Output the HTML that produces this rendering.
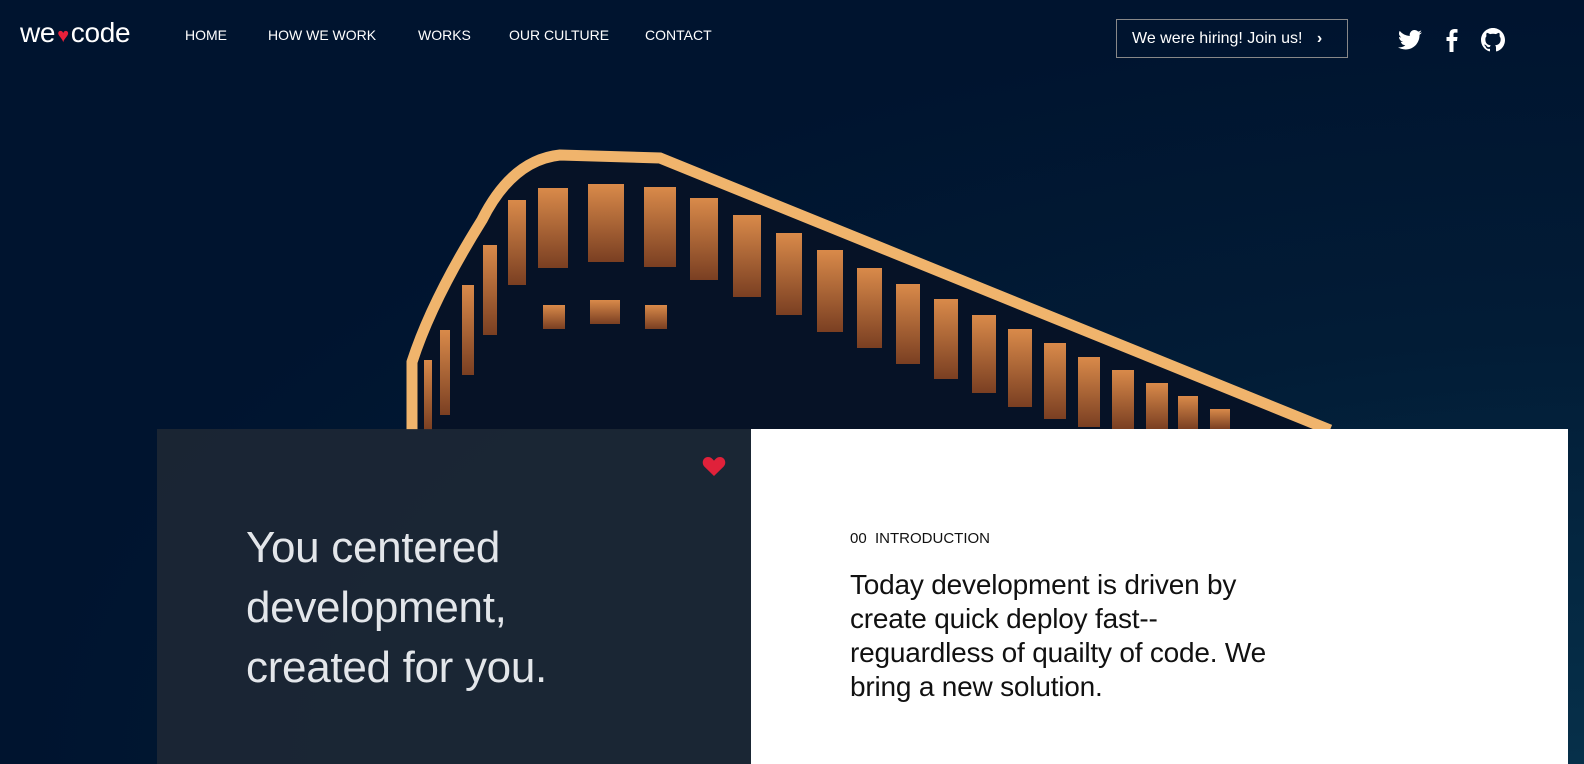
<!DOCTYPE html>
<html><head><style>
body{margin:0;width:1584px;height:764px;overflow:hidden;background:#011a33;font-family:"Liberation Sans",sans-serif;position:relative}
.bg{position:absolute;inset:0;background:radial-gradient(ellipse at 100% 100%,#06304a 0%,#021c36 40%,#00142f 70%),#011a33}
.nav{position:absolute;top:0;left:0;width:100%;height:70px}
.logo{position:absolute;left:20px;top:17px;color:#fff;font-size:28px;letter-spacing:-.3px}
.logo span{color:#e8203a;font-size:20px;margin:0 2px}
.menu a{position:absolute;top:27px;color:#fff;font-size:14px;text-decoration:none}
.btn{position:absolute;left:1116px;top:19px;width:232px;height:39px;border:1px solid #888;color:#fff;font-size:16px;line-height:38px;box-sizing:border-box;padding-left:15px}
.dark{position:absolute;left:157px;top:429px;width:594px;height:335px;background:rgba(30,40,52,.88)}
.white{position:absolute;left:751px;top:429px;width:817px;height:335px;background:#fff}
.h1{position:absolute;left:246px;top:518px;color:#e3e6ea;font-size:44px;line-height:60px;font-weight:300;letter-spacing:-.3px}
.intro{position:absolute;left:850px;top:530px;font-size:15px;color:#111}
.p{position:absolute;left:850px;top:568px;font-size:28px;line-height:34px;color:#111;width:440px;letter-spacing:-.2px}
</style></head><body>
<div class="bg"></div>
<svg style="position:absolute;left:0;top:0" width="1584" height="764">
<defs><linearGradient id="w" x1="0" y1="0" x2="0" y2="1"><stop offset="0" stop-color="#d98a4a"/><stop offset="1" stop-color="#7a3f22"/></linearGradient></defs>
<path d="M410 430 L410 360 Q430 300 480 220 Q510 160 560 155 L660 158 L1330 430 Z" fill="#061226"/>
<path d="M412 430 L412 362 Q432 300 482 220 Q512 160 560 155 L660 158 L1330 430" fill="none" stroke="#f0b46c" stroke-width="11"/>
<g fill="url(#w)">
<rect x="538" y="188" width="30" height="80"/><rect x="588" y="184" width="36" height="78"/><rect x="644" y="187" width="32" height="80"/>
<rect x="690" y="198" width="28" height="82"/><rect x="733" y="215" width="28" height="82"/><rect x="776" y="233" width="26" height="82"/>
<rect x="817" y="250" width="26" height="82"/><rect x="857" y="268" width="25" height="80"/><rect x="896" y="284" width="24" height="80"/>
<rect x="934" y="299" width="24" height="80"/><rect x="972" y="315" width="24" height="78"/><rect x="1008" y="329" width="24" height="78"/>
<rect x="1044" y="343" width="22" height="76"/><rect x="1078" y="357" width="22" height="70"/><rect x="1112" y="370" width="22" height="59"/>
<rect x="1146" y="383" width="22" height="46"/><rect x="1178" y="396" width="20" height="33"/><rect x="1210" y="409" width="20" height="20"/>
<rect x="508" y="200" width="18" height="85"/><rect x="483" y="245" width="14" height="90"/><rect x="462" y="285" width="12" height="90"/>
<rect x="440" y="330" width="10" height="85"/><rect x="424" y="360" width="8" height="70"/>
<rect x="590" y="300" width="30" height="24"/><rect x="543" y="305" width="22" height="24"/><rect x="645" y="305" width="22" height="24"/>
</g>
</svg>
<div class="nav">
<div class="logo">we<span>♥</span>code</div>
<div class="menu"><a style="left:185px">HOME</a><a style="left:268px">HOW WE WORK</a><a style="left:418px">WORKS</a><a style="left:509px">OUR CULTURE</a><a style="left:645px">CONTACT</a></div>
<div class="btn">We were hiring! Join us! <span style="margin-left:10px;font-weight:bold">›</span></div>
<svg style="position:absolute;left:1398px;top:29px" width="24" height="22" viewBox="0 0 24 20"><path fill="#fff" d="M24 2.4a10 10 0 0 1-2.8.8A5 5 0 0 0 23.3.4a10 10 0 0 1-3.1 1.2A4.9 4.9 0 0 0 11.8 6 14 14 0 0 1 1.7.9a4.9 4.9 0 0 0 1.5 6.6A4.9 4.9 0 0 1 1 6.9a4.9 4.9 0 0 0 3.9 4.8 5 5 0 0 1-2.2.1 4.9 4.9 0 0 0 4.6 3.4A9.900 9.900 0 0 1 0 17.3 14 14 0 0 0 7.5 19.5c9 0 14-7.5 14-14v-.6A10 10 0 0 0 24 2.4z"/></svg>
<svg style="position:absolute;left:1445px;top:28px" width="13" height="24" viewBox="0 0 12 24"><path fill="#fff" d="M8 24V13h3.5l.5-4H8V6.5C8 5.4 8.3 4.6 10 4.6h2V1.1A27 27 0 0 0 9 1C6 1 4 2.8 4 6.1V9H1v4h3v11z"/></svg>
<svg style="position:absolute;left:1481px;top:28px" width="24" height="24" viewBox="0 0 16 16"><path fill="#fff" d="M8 0C3.6 0 0 3.6 0 8c0 3.5 2.300 6.500 5.500 7.600.4.1.5-.2.5-.4v-1.4c-2.200.5-2.700-1-2.700-1-.4-.9-.9-1.200-.9-1.200-.7-.5.1-.5.1-.5.8.1 1.200.8 1.200.8.7 1.200 1.900.9 2.300.7.1-.5.3-.9.5-1.100-1.800-.2-3.600-.9-3.600-4 0-.9.3-1.600.8-2.100-.1-.2-.4-1 .1-2.100 0 0 .7-.2 2.200.8a7.500 7.500 0 0 1 4 0c1.500-1 2.200-.8 2.200-.8.4 1.100.2 1.900.1 2.100.5.6.8 1.300.8 2.100 0 3.100-1.900 3.800-3.700 4 .3.3.6.8.6 1.500v2.200c0 .2.1.5.6.4A8 8 0 0 0 16 8c0-4.400-3.600-8-8-8z"/></svg>
</div>
<div class="dark"></div>
<svg style="position:absolute;left:702px;top:455px" width="24" height="22" viewBox="0 0 24 22"><path fill="#e0213a" d="M12 21 2.5 11.8C-1 8.300 1 2 6 2c2.700 0 4.500 1.800 6 3.800C13.500 3.800 15.300 2 18 2c5 0 7 6.300 3.500 9.800z"/></svg>
<div class="white"></div>
<div class="h1">You centered<br>development,<br>created for you.</div>
<div class="intro">00&nbsp; INTRODUCTION</div>
<div class="p">Today development is driven by create quick deploy fast--reguardless of quailty of code. We bring a new solution.</div>
</body></html>
